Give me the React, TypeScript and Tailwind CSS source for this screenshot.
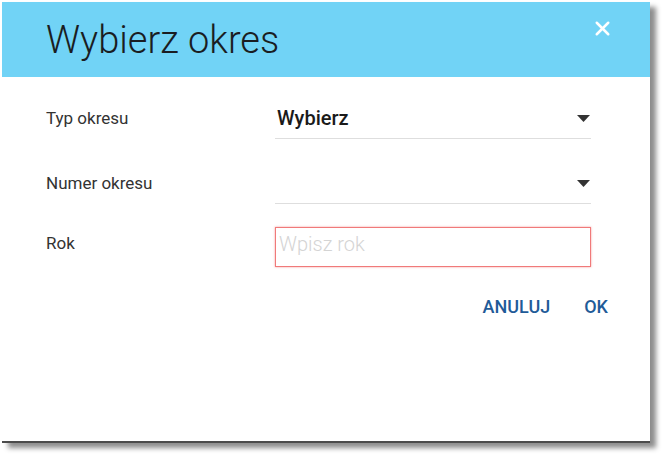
import { X } from 'lucide-react'

const FIELD_ROWS = [
  { label: 'Typ okresu', value: 'Wybierz' },
  { label: 'Numer okresu', value: '' },
]

function Caret() {
  return (
    <svg width="13" height="7" viewBox="0 0 13 7" className="shrink-0">
      <path d="M0 0 L13 0 L6.5 7 Z" fill="#333" />
    </svg>
  )
}

export default function App() {
  return (
    <div className="min-h-screen bg-white pl-[2px] pt-[2px] font-['Roboto',sans-serif]">
      <div className="w-[648px] h-[441px] bg-white border-b-2 border-[#4b4b4b] shadow-[6px_5px_5px_rgba(0,0,0,0.45)] flex flex-col">

        {/* Header */}
        <div className="h-[75px] bg-[#71d3f6] flex items-start justify-between pl-[44px] pr-[36px]">
          <h1 className="mt-[19px] text-[38px] leading-none font-light text-[#1a1d22]">Wybierz okres</h1>
          <button className="mt-[15px] text-white cursor-pointer">
            <X size={23} strokeWidth={2.6} />
          </button>
        </div>

        {/* Fields */}
        <div className="pl-[44px] pt-[21px] flex flex-col">
          {FIELD_ROWS.map((row, i) => (
            <div key={row.label} className={`flex ${i > 0 ? 'mt-[24px]' : ''}`}>
              <div className="w-[229px] text-[17px] leading-[40px] text-[#333]">{row.label}</div>
              <div className="w-[316px] h-[41px] border-b border-[#dedede] flex items-center justify-between pl-[2px] pr-[1px]">
                <span className="text-[20px] font-medium text-[#1a1a1a]">{row.value}</span>
                <Caret />
              </div>
            </div>
          ))}

          <div className="flex mt-[23px]">
            <div className="w-[229px] text-[17px] leading-[32px] text-[#333]">Rok</div>
            <input
              placeholder="Wpisz rok"
              className="w-[316px] h-[40px] border border-[#f07a7a] shadow-[0_0_2px_rgba(240,90,90,0.6)] outline-none pl-[3px] pb-[6px] text-[20px] font-light placeholder:text-[#d4d4d4]"
            />
          </div>
        </div>

        {/* Actions */}
        <div className="flex justify-end gap-[34px] pr-[42px] mt-[31px]">
          <button className="text-[18px] leading-none font-medium text-[#1f5b98] cursor-pointer">ANULUJ</button>
          <button className="text-[18px] leading-none font-medium text-[#1f5b98] cursor-pointer">OK</button>
        </div>
      </div>
    </div>
  )
}
